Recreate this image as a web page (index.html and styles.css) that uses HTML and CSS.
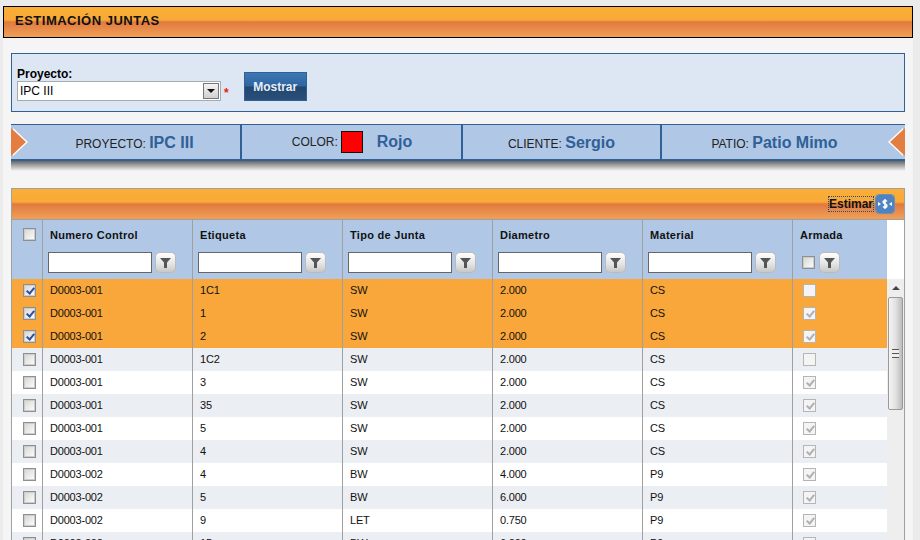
FILE: index.html
```html
<!DOCTYPE html>
<html lang="es">
<head>
  <meta charset="UTF-8">
  <title>Estimación Juntas</title>
  <link rel="stylesheet" href="styles.css">
</head>
<body>

  <div class="page">
    <h1 class="title-bar">ESTIMACIÓN JUNTAS</h1>

    <div class="content">
      <form class="filter-box">
        <div class="filter-field">
          <label>Proyecto:</label>
          <div class="combo">
            <span class="combo-text">IPC III</span>
            <span class="combo-btn"><i></i></span>
          </div>
        </div>
        <span class="required">*</span>
        <button type="button" class="btn-show">Mostrar</button>
      </form>

      <div class="info-band">
        <div class="info-cell first">PROYECTO: <b>IPC III</b></div>
        <div class="info-cell color-cell">COLOR: <span class="swatch"></span> <b>Rojo</b></div>
        <div class="info-cell">CLIENTE: <b>Sergio</b></div>
        <div class="info-cell last">PATIO: <b>Patio Mimo</b></div>
      </div>
      <div class="band-shadow"></div>

      <div class="grid">
        <div class="grid-toolbar">
          <a class="estimar">Estimar</a>
          <span class="estimar-icon">
            <svg width="18" height="18" viewBox="0 0 18 18">
              <path d="M2 7l3 2-3 2z M16 7l-3 2 3 2z" fill="#fff"/>
              <path d="M11 6.500C10.500 5.500 7 5 7 7c0 2 4 1.500 4 4 0 2-3.500 1.500-4 .5M9 4v10" fill="none" stroke="#fff" stroke-width="1.500"/>
            </svg>
          </span>
        </div>
        <div class="grid-main">
          <table class="grid-table">
            <thead>
              <tr>
                <th class="col-check"><span class="check head-check"></span></th>
                <th class="col-text"><div class="th-label">Numero Control</div><div class="th-filter"><input type="text"><span class="filter-btn"><svg width="13" height="13" viewBox="0 0 13 13"><path d="M1 2h11L8 6.500V12H5V6.500z" fill="#555"/></svg></span></div></th>
                <th class="col-text"><div class="th-label">Etiqueta</div><div class="th-filter"><input type="text"><span class="filter-btn"><svg width="13" height="13" viewBox="0 0 13 13"><path d="M1 2h11L8 6.500V12H5V6.500z" fill="#555"/></svg></span></div></th>
                <th class="col-text"><div class="th-label">Tipo de Junta</div><div class="th-filter"><input type="text"><span class="filter-btn"><svg width="13" height="13" viewBox="0 0 13 13"><path d="M1 2h11L8 6.500V12H5V6.500z" fill="#555"/></svg></span></div></th>
                <th class="col-text"><div class="th-label">Diametro</div><div class="th-filter"><input type="text"><span class="filter-btn"><svg width="13" height="13" viewBox="0 0 13 13"><path d="M1 2h11L8 6.500V12H5V6.500z" fill="#555"/></svg></span></div></th>
                <th class="col-text"><div class="th-label">Material</div><div class="th-filter"><input type="text"><span class="filter-btn"><svg width="13" height="13" viewBox="0 0 13 13"><path d="M1 2h11L8 6.500V12H5V6.500z" fill="#555"/></svg></span></div></th>
                <th class="col-armada"><div class="th-label">Armada</div><div class="th-filter"><span class="check head-check"></span><span class="filter-btn"><svg width="13" height="13" viewBox="0 0 13 13"><path d="M1 2h11L8 6.500V12H5V6.500z" fill="#555"/></svg></span></div></th>
              </tr>
            </thead>
            <tbody>
              <tr class="selected"><td class="cell-check"><span class="check on"></span></td><td>D0003-001</td><td>1C1</td><td>SW</td><td>2.000</td><td>CS</td><td class="cell-armada"><span class="flag"></span></td></tr>
              <tr class="selected"><td class="cell-check"><span class="check on"></span></td><td>D0003-001</td><td>1</td><td>SW</td><td>2.000</td><td>CS</td><td class="cell-armada"><span class="flag on"></span></td></tr>
              <tr class="selected"><td class="cell-check"><span class="check on"></span></td><td>D0003-001</td><td>2</td><td>SW</td><td>2.000</td><td>CS</td><td class="cell-armada"><span class="flag on"></span></td></tr>
              <tr class="alt"><td class="cell-check"><span class="check"></span></td><td>D0003-001</td><td>1C2</td><td>SW</td><td>2.000</td><td>CS</td><td class="cell-armada"><span class="flag"></span></td></tr>
              <tr><td class="cell-check"><span class="check"></span></td><td>D0003-001</td><td>3</td><td>SW</td><td>2.000</td><td>CS</td><td class="cell-armada"><span class="flag on"></span></td></tr>
              <tr class="alt"><td class="cell-check"><span class="check"></span></td><td>D0003-001</td><td>35</td><td>SW</td><td>2.000</td><td>CS</td><td class="cell-armada"><span class="flag on"></span></td></tr>
              <tr><td class="cell-check"><span class="check"></span></td><td>D0003-001</td><td>5</td><td>SW</td><td>2.000</td><td>CS</td><td class="cell-armada"><span class="flag on"></span></td></tr>
              <tr class="alt"><td class="cell-check"><span class="check"></span></td><td>D0003-001</td><td>4</td><td>SW</td><td>2.000</td><td>CS</td><td class="cell-armada"><span class="flag on"></span></td></tr>
              <tr><td class="cell-check"><span class="check"></span></td><td>D0003-002</td><td>4</td><td>BW</td><td>4.000</td><td>P9</td><td class="cell-armada"><span class="flag on"></span></td></tr>
              <tr class="alt"><td class="cell-check"><span class="check"></span></td><td>D0003-002</td><td>5</td><td>BW</td><td>6.000</td><td>P9</td><td class="cell-armada"><span class="flag on"></span></td></tr>
              <tr><td class="cell-check"><span class="check"></span></td><td>D0003-002</td><td>9</td><td>LET</td><td>0.750</td><td>P9</td><td class="cell-armada"><span class="flag on"></span></td></tr>
              <tr class="alt"><td class="cell-check"><span class="check"></span></td><td>D0003-002</td><td>15</td><td>BW</td><td>6.000</td><td>P9</td><td class="cell-armada"><span class="flag on"></span></td></tr>
            </tbody>
          </table>
          <div class="scroll-col">
            <div class="scrollbar">
              <div class="scroll-up"></div>
              <div class="scroll-thumb"><i></i></div>
            </div>
          </div>
        </div>
      </div>
    </div>
  </div>

</body>
</html>
```

FILE: styles.css
```css
html, body { margin: 0; height: 540px; overflow: hidden; }
body { background: #ebebeb; font-family: "Liberation Sans", Arial, sans-serif; color: #000; }
.page { margin: 6px 7px 0 3px; background: #f5f5f5; }

.title-bar { margin: 0; height: 30px; padding-left: 11px; border: 1px solid #000; font-size: 13px; line-height: 28px; font-weight: bold; letter-spacing: 0.5px; color: #111; background: linear-gradient(#fbae37 0, #f8a938 13px, #e07a3e 15px, #f0a058 30px); }

.content { padding: 15px 8px 0; }

.filter-box { display: flex; align-items: flex-end; height: 57px; border: 1px solid #2f6096; background: #dde7f4; padding: 0 5px; }
.filter-field { margin-bottom: 10px; }
.filter-field label { display: block; font-size: 12px; font-weight: bold; line-height: 14px; }
.combo { display: flex; width: 204px; height: 20px; box-sizing: border-box; border: 1px solid #a5acb2; background: #fff; }
.combo-text { flex: 1; font-size: 12px; line-height: 18px; padding-left: 2px; }
.combo-btn { width: 16px; margin: 1px; background: linear-gradient(#f4f4f4, #cfcfcf); border: 1px solid #777; box-sizing: border-box; display: flex; align-items: center; justify-content: center; }
.combo-btn i { border: 4px solid transparent; border-top-color: #111; border-bottom: 0; }
.required { color: #e8200e; font-size: 12px; font-weight: bold; margin: 0 0 11px 3px; line-height: 14px; }
.btn-show { width: 63px; height: 29px; margin: 0 0 10px 15px; padding: 0; border: 1px solid #2f6096; font: bold 12px "Liberation Sans", Arial, sans-serif; color: #e6eef8; background: linear-gradient(#3d78b4 0, #2f64a0 13px, #22466f 14px, #2a4f7a 100%); }

.info-band { display: flex; margin-top: 12px; height: 37px; box-sizing: border-box; border-top: 1px solid #2f6096; border-bottom: 2px solid #2f6096; background: #b0c8e6; position: relative; }
.info-band::before, .info-band::after { content: ""; position: absolute; top: 3px; width: 0; height: 0; border: 14px solid transparent; }
.info-band::before { left: 0; border-left: 15px solid #e37d42; border-right: 0; filter: drop-shadow(2px 0 0 #fff); }
.info-band::after { right: 0; border-right: 15px solid #e37d42; border-left: 0; filter: drop-shadow(-2px 0 0 #fff); }
.info-cell { font-size: 12px; line-height: 36px; text-align: center; color: #222; border-left: 2px solid #2f6096; box-sizing: border-box; }
.info-cell:nth-child(1) { width: 229px; border-left: 0; padding-left: 18px; }
.info-cell:nth-child(2) { width: 221px; }
.info-cell:nth-child(3) { width: 199px; }
.info-cell:nth-child(4) { flex: 1; padding-right: 18px; }
.info-cell b { font-size: 16px; color: #2f6096; }
.info-cell.color-cell { display: flex; align-items: center; justify-content: center; gap: 3px; line-height: 18px; padding-left: 1px; }
.swatch { width: 22px; height: 22px; margin-right: 11px; box-sizing: border-box; background: #f00; border: 1px solid #111; }
.band-shadow { height: 10px; background: linear-gradient(#666, #f5f5f5); }

.grid { margin-top: 17px; border: 1px solid #a0a0a0; }
.grid-toolbar { height: 30px; display: flex; align-items: center; justify-content: flex-end; padding-right: 10px; border-bottom: 1px solid #a0a0a0; background: linear-gradient(#fbae37 0, #f8a938 13px, #e07a3e 15px, #f0a058 30px); }
.estimar { font-size: 12px; font-weight: bold; line-height: 14px; outline: 1px dotted #1f4f8f; color: #111; }
.estimar-icon { width: 18px; height: 18px; margin-left: 3px; border-radius: 3px; background: #4f83c0; outline: 1px solid #6b8fb8; display: block; }
.estimar-icon svg { display: block; }

.grid-main { display: flex; background: #fff; }
.grid-table { width: 875px; table-layout: fixed; border-collapse: collapse; font-size: 11px; }
.grid-table th { height: 59px; padding: 0; background: #b0c8e6; border-right: 1px solid #a0a0a0; text-align: left; vertical-align: top; font-size: 11px; color: #111; }
.col-check { width: 30px; }
.col-text { width: 149px; }
.grid-table th.col-armada { width: 94px; border-right: 0; }
.th-label { padding: 8px 0 0 7px; height: 23px; line-height: 14px; letter-spacing: 0.3px; }
.th-filter { display: flex; align-items: center; padding-left: 5px; height: 22px; }
.th-filter input { width: 104px; height: 21px; margin: 0; padding: 0; box-sizing: border-box; border: 1px solid #666; background: #fff; }
.filter-btn { width: 21px; height: 21px; margin-left: 3px; box-sizing: border-box; border: 1px solid #bbb; border-radius: 5px; background: linear-gradient(#fff, #e2e2e2 60%, #c8c8c8); display: flex; align-items: center; justify-content: center; }
.col-armada .th-filter { padding-left: 9px; }
.col-armada .filter-btn { margin-left: 4px; }

.grid-table td { height: 23px; box-sizing: border-box; padding: 0 0 2px 7px; border-right: 1px solid #a0a0a0; color: #111; letter-spacing: -0.2px; }
.grid-table td:last-child { border-right: 0; }
.grid-table td.cell-check { padding: 0; }
.grid-table td.cell-armada { padding: 0 0 0 10px; }
.selected td { background: #f9a63a; }
.alt td { background: #ebeef3; }

.check, .flag { display: block; box-sizing: border-box; width: 13px; height: 13px; }
.check { margin: 0 0 0 11px; border: 1px solid #8e8f8f; background: linear-gradient(135deg, #d4d4d0, #fff); box-shadow: inset 0 0 0 1px #ccc; }
.th-filter .check { margin: 0; }
th.col-check .check { margin-top: 8px; }
.check.on { position: relative; }
.check.on::after { content: ""; position: absolute; left: 4px; top: 1px; width: 3px; height: 6px; border: solid #2f4f9e; border-width: 0 2px 2px 0; transform: rotate(40deg); }
.flag { border: 1px solid #b5b5b5; background: #f4f4f4; position: relative; }
.flag.on::after { content: ""; position: absolute; left: 4px; top: 1px; width: 3px; height: 6px; border: solid #b0b0b0; border-width: 0 2px 2px 0; transform: rotate(40deg); }

.scroll-col { flex: 1; padding-top: 59px; }
.scrollbar { height: 276px; background: #eeeeee; position: relative; }
.scroll-up { height: 18px; position: relative; }
.scroll-up::after { content: ""; position: absolute; left: 5px; top: 7px; border: 4px solid transparent; border-bottom-color: #444; border-top: 0; }
.scroll-thumb { height: 113px; margin: 0 1px; box-sizing: border-box; border: 1px solid #999; border-radius: 2px; background: linear-gradient(90deg, #f4f4f4, #e2e2e2 50%, #bcbcbc); display: flex; align-items: center; justify-content: center; }
.scroll-thumb i { width: 7px; height: 7px; border-top: 1px solid #555; border-bottom: 1px solid #555; background: linear-gradient(#eee 40%, #555 40%, #555 60%, #eee 60%); }
```
